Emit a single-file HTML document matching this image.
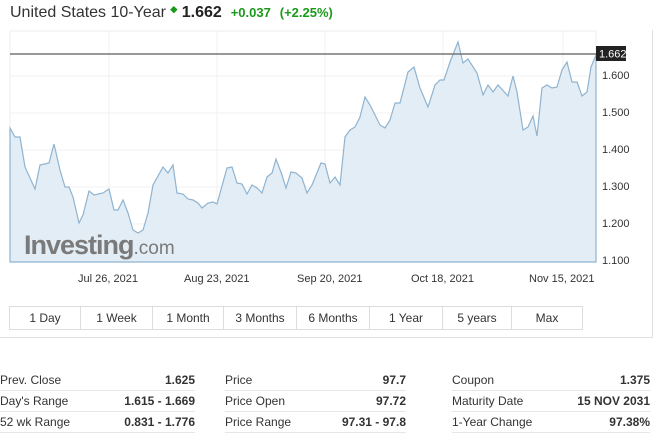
<!DOCTYPE html>
<html><head><meta charset="utf-8"><style>
body{margin:0;width:670px;height:442px;background:#fff;font-family:"Liberation Sans",Arial,sans-serif;overflow:hidden;position:relative;color:#333}
.t{position:absolute;left:10px;top:4px;font-size:16px;color:#333;white-space:nowrap}
.t b{color:#222}
.g{color:#1a9a1a;font-weight:bold;font-size:13px}
.ax{position:absolute;font-size:11px;color:#333}
.btns{position:absolute;left:9px;top:306px;height:22px;display:flex;border:1px solid #ddd}
.btns div{font-size:12px;color:#333;text-align:center;line-height:22px;border-right:1px solid #ddd}
.btns div:last-child{border-right:none}
table{position:absolute;top:370px;border-collapse:collapse;font-size:12px;color:#333}
td{height:20px;padding:0;border-bottom:1px solid #e6e6e6}
td.v{text-align:right;font-weight:bold}
</style></head><body>
<div class="t">United States 10-Year <span class="g" style="font-size:9px;vertical-align:5px">◆</span> <b>1.662</b> &nbsp;<span class="g">+0.037</span> &nbsp;<span class="g">(+2.25%)</span></div>
<div style="position:absolute;left:652px;top:30px;width:1px;height:308px;background:#e0e0e0"></div>
<div style="position:absolute;left:0;top:337px;width:652px;height:1px;background:#e0e0e0"></div>
<svg style="position:absolute;left:0;top:0" width="670" height="300">
<rect x="10" y="31" width="586" height="231" fill="#fff" stroke="#eee"/>
<g stroke="#f0f0f0"><line x1="10" y1="76" x2="596" y2="76"/><line x1="10" y1="113" x2="596" y2="113"/><line x1="10" y1="150" x2="596" y2="150"/><line x1="10" y1="187" x2="596" y2="187"/><line x1="10" y1="224" x2="596" y2="224"/><line x1="109" y1="31" x2="109" y2="262"/><line x1="217" y1="31" x2="217" y2="262"/><line x1="325" y1="31" x2="325" y2="262"/><line x1="443" y1="31" x2="443" y2="262"/><line x1="563" y1="31" x2="563" y2="262"/></g>
<path fill="#e3edf5" stroke="#8fb3d0" stroke-width="1.2" d="M10,128 L15,137 L20,137 L25,167 L35,189 L40,165 L49,163 L54,144 L60,170 L65,187 L69,187 L73,197 L79,223 L83,215 L89,191 L94,195 L103,193 L109,189 L114,210 L118,210 L123,200 L128,213 L133,230 L138,233 L143,230 L148,213 L153,185 L163,167 L168,173 L173,165 L177,193 L183,194 L188,199 L193,200 L198,203 L202,208 L208,203 L213,202 L217,204 L227,168 L232,167 L237,183 L242,184 L247,194 L252,185 L257,188 L262,193 L267,177 L272,173 L276,159 L282,175 L286,188 L291,172 L296,173 L302,178 L307,193 L312,185 L321,163 L325,164 L330,183 L335,177 L340,185 L345,137 L350,130 L355,127 L360,117 L365,97 L370,105 L380,125 L385,128 L390,120 L395,103 L400,103 L408,72 L414,67 L420,88 L428,107 L435,85 L440,80 L444,80 L450,62 L458,42 L463,63 L468,59 L477,73 L483,95 L488,85 L493,92 L498,85 L508,96 L513,76 L517,92 L523,130 L528,127 L533,116 L537,136 L542,88 L547,85 L552,88 L557,87 L562,70 L567,62 L572,82 L577,82 L582,96 L587,92 L591,67 L596,55 L596,262 L10,262 Z"/>
<line x1="10" y1="54" x2="596" y2="54" stroke="#777" stroke-width="1.5"/>
<rect x="596" y="46" width="30" height="15" fill="#222"/>
<text x="599" y="57.5" font-size="11" fill="#fff" font-family="Liberation Sans,sans-serif">1.662</text>
<text x="24" y="254" font-size="27" font-weight="bold" fill="#7a7a7a" font-family="Liberation Sans,sans-serif" letter-spacing="-1">Investing<tspan font-weight="normal" font-size="19" letter-spacing="0">.com</tspan></text>
</svg>
<div class="ax" style="left:602px;top:70px">1.600</div>
<div class="ax" style="left:602px;top:107px">1.500</div>
<div class="ax" style="left:602px;top:144px">1.400</div>
<div class="ax" style="left:602px;top:181px">1.300</div>
<div class="ax" style="left:602px;top:218px">1.200</div>
<div class="ax" style="left:602px;top:255px">1.100</div>
<div class="ax" style="left:78px;top:273px">Jul 26, 2021</div>
<div class="ax" style="left:184px;top:273px">Aug 23, 2021</div>
<div class="ax" style="left:297px;top:273px">Sep 20, 2021</div>
<div class="ax" style="left:411px;top:273px">Oct 18, 2021</div>
<div class="ax" style="left:529px;top:273px">Nov 15, 2021</div>
<div class="btns">
<div style="width:70px">1 Day</div><div style="width:71px">1 Week</div><div style="width:70px">1 Month</div><div style="width:72px">3 Months</div><div style="width:72px">6 Months</div><div style="width:72px">1 Year</div><div style="width:68px">5 years</div><div style="width:70px">Max</div>
</div>
<table style="left:0;width:195px"><tr><td>Prev. Close</td><td class="v">1.625</td></tr><tr><td>Day's Range</td><td class="v">1.615 - 1.669</td></tr><tr><td>52 wk Range</td><td class="v">0.831 - 1.776</td></tr></table>
<table style="left:225px;width:181px"><tr><td>Price</td><td class="v">97.7</td></tr><tr><td>Price Open</td><td class="v">97.72</td></tr><tr><td>Price Range</td><td class="v">97.31 - 97.8</td></tr></table>
<table style="left:452px;width:198px"><tr><td>Coupon</td><td class="v">1.375</td></tr><tr><td>Maturity Date</td><td class="v">15 NOV 2031</td></tr><tr><td>1-Year Change</td><td class="v">97.38%</td></tr></table>
</body></html>
